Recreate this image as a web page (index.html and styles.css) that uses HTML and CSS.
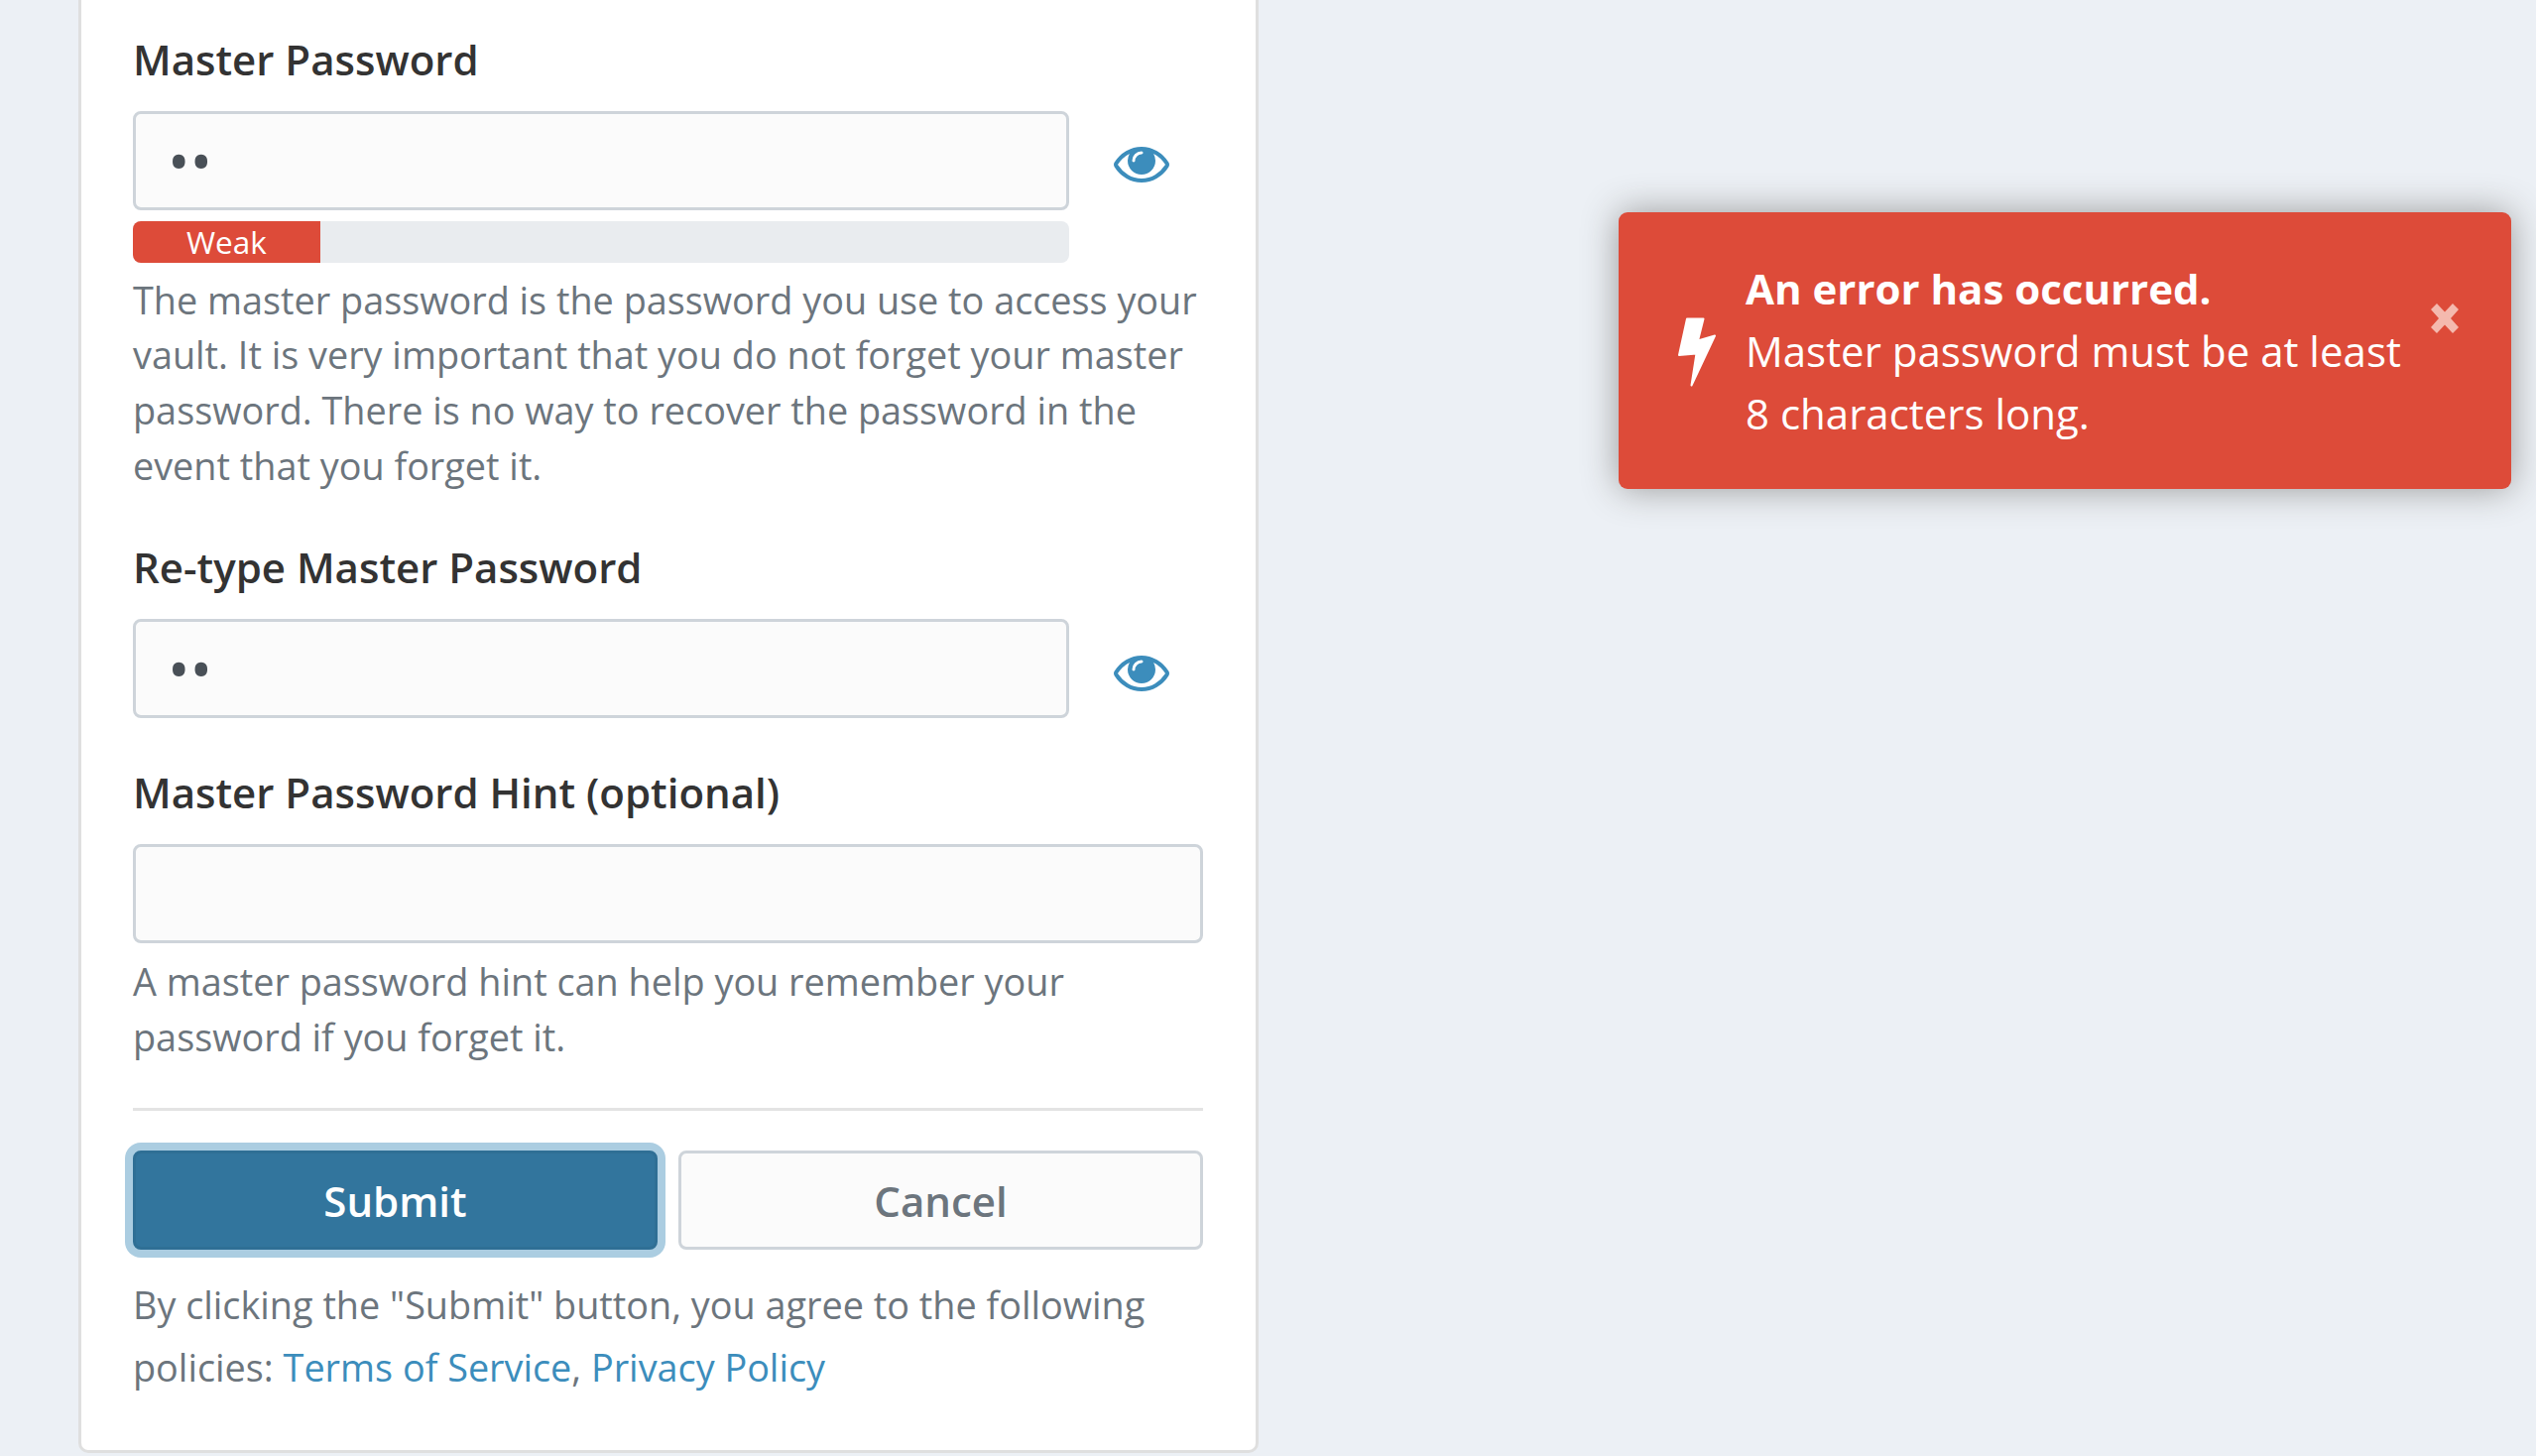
FILE: index.html
```html
<!DOCTYPE html>
<html lang="en">
<head>
	<meta charset="UTF-8">
	<meta name="viewport" content="width=device-width, initial-scale=1.0">
	<title>Create Account</title>
	<link rel="stylesheet" href="styles.css">
</head>
<body>
	<div class="card">
		<div class="field">
			<label class="label">Master Password</label>
			<div class="inputRow">
				<input class="input secret" type="password" value="ab">
				<svg class="eye" viewBox="0 384 1792 1152"><path d="M1664 960q-152-236-381-353 61 104 61 225 0 185-131.500 316.500t-316.500 131.500-316.500-131.500-131.500-316.500q0-121 61-225-229 117-381 353 133 205 333.500 326.500t434.500 121.500 434.500-121.500 333.500-326.500zm-720-384q0-20-14-34t-34-14q-125 0-214.500 89.500t-89.500 214.500q0 20 14 34t34 14 34-14 14-34q0-86 61-147t147-61q20 0 34-14t14-34zm848 384q0 34-20 69-140 230-376.500 368.500t-499.500 138.500-499.500-139-376.500-368q-20-35-20-69t20-69q140-229 376.500-368t499.500-139 499.500 139 376.500 368q20 35 20 69z"/></svg>
			</div>
			<div class="progress"><div class="progressBar">Weak</div></div>
			<div class="help">The master password is the password you use to access your vault. It is very important that you do not forget your master password. There is no way to recover the password in the event that you forget it.</div>
		</div>
		<div class="field">
			<label class="label">Re-type Master Password</label>
			<div class="inputRow">
				<input class="input secret" type="password" value="ab">
				<svg class="eye" viewBox="0 384 1792 1152"><path d="M1664 960q-152-236-381-353 61 104 61 225 0 185-131.500 316.500t-316.500 131.500-316.500-131.500-131.500-316.500q0-121 61-225-229 117-381 353 133 205 333.500 326.500t434.500 121.500 434.500-121.500 333.500-326.500zm-720-384q0-20-14-34t-34-14q-125 0-214.500 89.500t-89.500 214.500q0 20 14 34t34 14 34-14 14-34q0-86 61-147t147-61q20 0 34-14t14-34zm848 384q0 34-20 69-140 230-376.500 368.500t-499.500 138.500-499.500-139-376.500-368q-20-35-20-69t20-69q140-229 376.500-368t499.500-139 499.500 139 376.500 368q20 35 20 69z"/></svg>
			</div>
		</div>
		<div class="field">
			<label class="label">Master Password Hint (optional)</label>
			<input class="input" type="text">
			<div class="help hintHelp">A master password hint can help you remember your password if you forget it.</div>
		</div>
		<hr class="divider">
		<div class="buttons">
			<button class="btn primary">Submit</button>
			<button class="btn">Cancel</button>
		</div>
		<div class="terms">By clicking the "Submit" button, you agree to the following policies: <a href="#">Terms of Service</a>, <a href="#">Privacy Policy</a></div>
	</div>

	<div class="toast">
		<svg class="bolt" viewBox="0 0 38 70"><polygon points="9,1.500 25.500,1.500 20,23.500 37,18.500 13.500,68.500 18.500,36.500 1,38"/></svg>
		<div class="toastText">
			<div class="toastTitle">An error has occurred.</div>
			<div>Master password must be at least 8 characters long.</div>
		</div>
		<svg class="close" viewBox="0 0 28 30"><path d="M0 6 6 0 14 8.500 22 0 28 6 20 15 28 24 22 30 14 21.500 6 30 0 24 8 15z"/></svg>
	</div>
</body>
</html>
```

FILE: styles.css
```css
html, body {
	height: 100%;
	overflow: hidden;
}
body {
	margin: 0;
	padding-left: 79px;
	background-color: #ecf0f5;
	font-family: "Open Sans", sans-serif;
	font-size: 42px;
	line-height: 1.5;
	color: #333;
}
.card {
	box-sizing: border-box;
	width: 1190px;
	padding: 27.500px 53px 52px 52px;
	background-color: #fff;
	border: 3px solid #dfdfdf;
	border-top: none;
	border-radius: 0 0 10px 10px;
}
.field {
	margin-bottom: 42.500px;
}
.field:last-of-type {
	margin-bottom: 0;
}
.label {
	display: block;
	margin-bottom: 21px;
	font-weight: 600;
}
.inputRow {
	display: flex;
	align-items: center;
}
.input {
	display: block;
	box-sizing: border-box;
	width: 100%;
	height: 100px;
	padding: 0 32px;
	background-color: #fbfbfb;
	border: 3px solid #ced4da;
	border-radius: 8px;
	font-family: inherit;
	font-size: 42px;
	color: #495057;
	outline: none;
}
.inputRow .input {
	width: 944px;
}
.secret {
	font-size: 60px;
}
.eye {
	width: 56px;
	height: 36px;
	margin: 9px 0 0 45px;
	fill: #3c8dbc;
}
.progress {
	width: 944px;
	height: 42px;
	margin-top: 11px;
	background-color: #e9ecef;
	border-radius: 8px;
	overflow: hidden;
}
.progressBar {
	width: 20%;
	height: 100%;
	background-color: #dd4b39;
	color: #fff;
	font-size: 31.500px;
	line-height: 42px;
	text-align: center;
}
.help {
	margin-top: 10px;
	font-size: 37.800px;
	line-height: 55.800px;
	color: #6c757d;
}
.hintHelp {
	margin-top: 11.500px;
}
.divider {
	height: 3px;
	margin: 43px 0 40.500px;
	background-color: #e3e3e3;
	border: none;
}
.buttons {
	display: flex;
	gap: 21px;
}
.btn {
	flex: 1;
	box-sizing: border-box;
	height: 100px;
	background-color: #fbfbfb;
	border: 3px solid #ced4da;
	border-radius: 8px;
	font-family: inherit;
	font-size: 42px;
	font-weight: 600;
	color: #6c757d;
}
.primary {
	background-color: #32759d;
	border-color: #2f6f95;
	color: #fff;
	box-shadow: 0 0 0 8px #abcde1;
}
.terms {
	margin-top: 23.700px;
	font-size: 37.800px;
	line-height: 63px;
	color: #6c757d;
}
.terms a {
	color: #3c8dbc;
	text-decoration: none;
}
.toast {
	position: absolute;
	top: 214px;
	right: 25px;
	display: flex;
	align-items: center;
	box-sizing: border-box;
	width: 900px;
	padding: 45px 53px 45px 60px;
	background-color: #dd4b39;
	border-radius: 9px;
	box-shadow: 0 0 36px #999;
	color: #fff;
	line-height: 63px;
}
.bolt {
	flex: none;
	width: 38px;
	height: 70px;
	margin: 2px 30px 0 0;
	fill: #fff;
	stroke: #fff;
	stroke-width: 2px;
	stroke-linejoin: round;
}
.toastText {
	flex: 1;
}
.toastTitle {
	font-weight: 700;
}
.close {
	flex: none;
	align-self: flex-start;
	width: 28px;
	height: 30px;
	margin-top: 47px;
	fill: #f4b9ae;
}
```
